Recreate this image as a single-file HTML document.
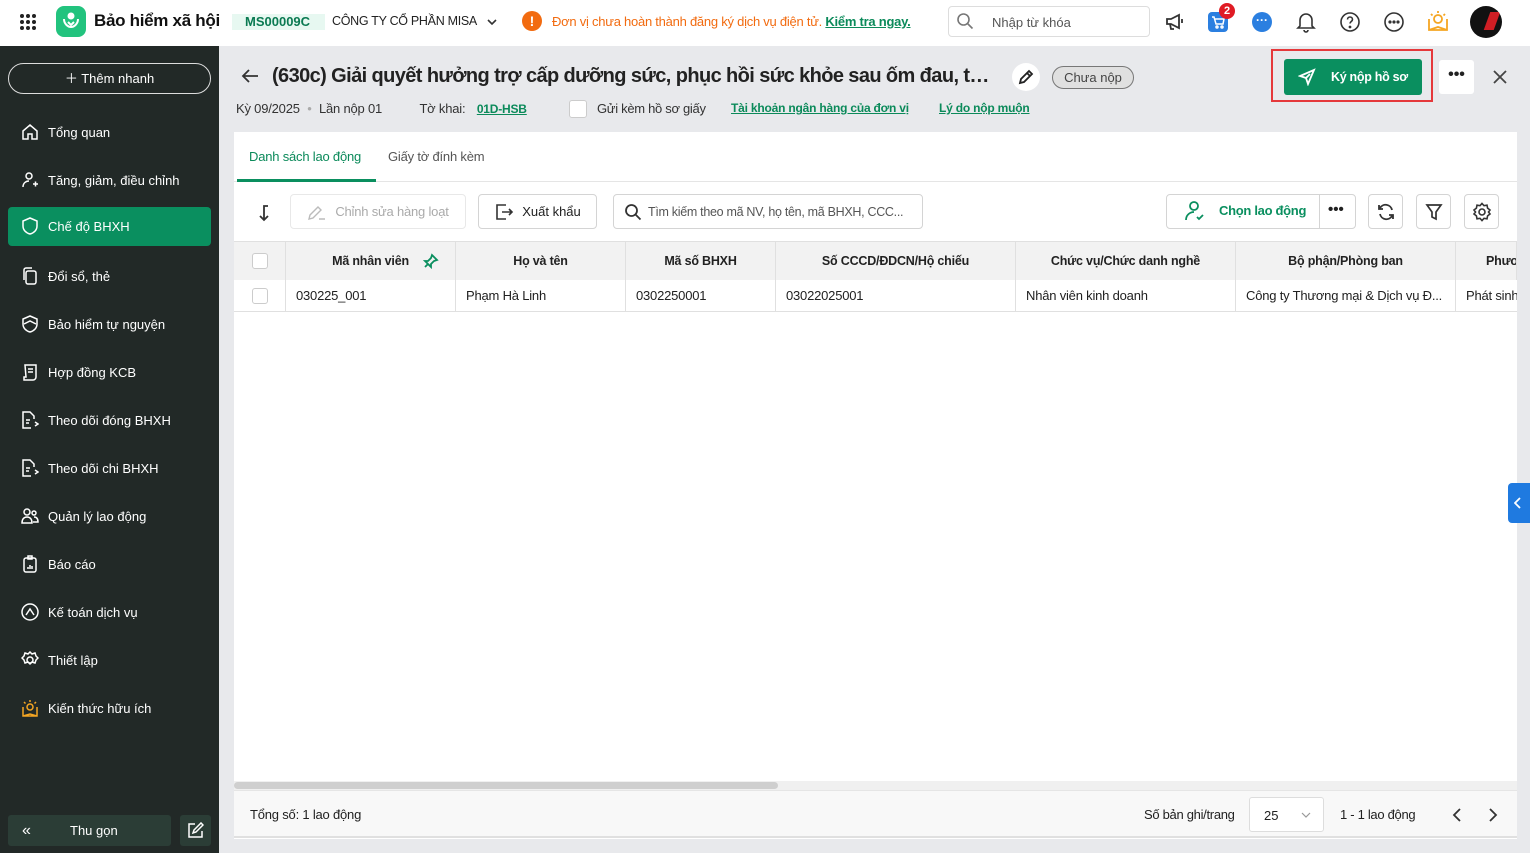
<!DOCTYPE html>
<html><head><meta charset="utf-8">
<style>
*{box-sizing:border-box;margin:0;padding:0}
body{width:1530px;height:853px;overflow:hidden;background:#e8e9ec;font-family:"Liberation Sans","Noto Sans CJK SC",sans-serif;font-size:13px;color:#212121;position:relative}
.a{position:absolute}
.hdr{left:0;top:0;width:1530px;height:46px;background:#fff}
.side{left:0;top:46px;width:219px;height:807px;background:#222927}
.nav{position:absolute;left:8px;width:203px;height:39px;color:#fff;font-size:13px;display:flex;align-items:center;padding-left:40px}
.nav svg{position:absolute;left:13px;top:10px}
.nav.on{background:#0a8f5f;border-radius:4px}
.btn{position:absolute;border:1px solid #d4d4d4;border-radius:4px;background:#fff;display:flex;align-items:center;justify-content:center}
.th,.td{position:absolute;display:flex;align-items:center;border-right:1px solid #e0e0e0;overflow:hidden;white-space:nowrap}
.th{top:242px;height:38px;background:#f2f2f2;font-weight:bold;justify-content:center;font-size:12.5px;color:#222;letter-spacing:-0.2px}
.td{top:280px;height:32px;padding-left:10px;border-bottom:1px solid #e0e0e0;letter-spacing:-0.2px}
.cb{width:16px;height:16px;border:1px solid #ccc;border-radius:3px;background:#fff}
</style></head><body>
<div class="a hdr"></div>
<svg class="a" style="left:19px;top:13px" width="18" height="18" viewBox="0 0 18 18" fill="#222"><circle cx="3" cy="3" r="2"/><circle cx="9" cy="3" r="2"/><circle cx="15" cy="3" r="2"/><circle cx="3" cy="9" r="2"/><circle cx="9" cy="9" r="2"/><circle cx="15" cy="9" r="2"/><circle cx="3" cy="15" r="2"/><circle cx="9" cy="15" r="2"/><circle cx="15" cy="15" r="2"/></svg>
<div class="a" style="left:56px;top:6px;width:30px;height:31px;border-radius:8px;background:#22c37e"></div>
<svg class="a" style="left:60px;top:10px" width="22" height="22" viewBox="0 0 22 22" fill="none" stroke="#fff" stroke-width="2"><circle cx="11" cy="6" r="2.5" fill="#fff"/><path d="M4 9c0 5 4 8 7 8s7-3 7-8"/><path d="M8 12l3 3 3-3"/></svg>
<div class="a" style="left:94px;top:11px;font-size:17px;font-weight:bold;color:#111;letter-spacing:-0.3px">Bảo hiểm xã hội</div>
<div class="a" style="left:232px;top:14px;width:93px;height:16px;background:#e7f8f1"></div>
<div class="a" style="left:245px;top:14px;font-weight:bold;color:#0b7a52;font-size:13px">MS00009C</div>
<div class="a" style="left:332px;top:14px;font-size:12.5px;color:#222;letter-spacing:-0.3px">CÔNG TY CỔ PHẦN MISA</div>
<svg class="a" style="left:486px;top:17px" width="12" height="10" viewBox="0 0 12 10" fill="none" stroke="#333" stroke-width="1.6"><path d="M2 3l4 4 4-4"/></svg>
<div class="a" style="left:522px;top:11px;width:20px;height:20px;border-radius:50%;background:#f26b10;color:#fff;font-weight:bold;text-align:center;line-height:20px;font-size:14px">!</div>
<div class="a" style="left:552px;top:14px;color:#f26b10;font-size:13px;letter-spacing:-0.25px;white-space:nowrap">Đơn vị chưa hoàn thành đăng ký dịch vụ điện tử. <b style="color:#0b8a5a;text-decoration:underline">Kiểm tra ngay.</b></div>
<div class="a" style="left:948px;top:6px;width:202px;height:31px;border:1px solid #ddd;border-radius:4px"></div>
<svg class="a" style="left:956px;top:12px" width="18" height="18" viewBox="0 0 18 18" fill="none" stroke="#777" stroke-width="1.6"><circle cx="7.5" cy="7.5" r="5.5"/><path d="M11.5 11.5l5 5"/></svg>
<div class="a" style="left:992px;top:15px;color:#555">Nhập từ khóa</div>
<svg class="a" style="left:1164px;top:12px" width="22" height="20" viewBox="0 0 22 20" fill="none" stroke="#333" stroke-width="1.8"><path d="M3 7h4l8-4v13l-8-4H3zM6 12l1 5h3M18 7v4"/></svg>
<div class="a" style="left:1208px;top:12px;width:20px;height:20px;border-radius:4px;background:#2b7fe0"></div>
<svg class="a" style="left:1210px;top:14px" width="16" height="16" viewBox="0 0 16 16" fill="none" stroke="#fff" stroke-width="1.5"><path d="M2 3h2l2 7h7l1-5H5"/><circle cx="7" cy="13" r="1"/><circle cx="12" cy="13" r="1"/></svg>
<div class="a" style="left:1219px;top:3px;width:16px;height:16px;border-radius:50%;background:#e01b24;color:#fff;font-size:11px;font-weight:bold;text-align:center;line-height:16px">2</div>
<div class="a" style="left:1252px;top:12px;width:20px;height:20px;border-radius:50%;background:#2b7fe0;color:#fff;font-size:12px;text-align:center;line-height:16px;font-weight:bold">···</div>
<svg class="a" style="left:1296px;top:11px" width="20" height="22" viewBox="0 0 20 22" fill="none" stroke="#333" stroke-width="1.6"><path d="M4 15V9a6 6 0 0112 0v6l2 2H2zM8 19a2 2 0 004 0"/></svg>
<svg class="a" style="left:1339px;top:11px" width="22" height="22" viewBox="0 0 22 22" fill="none" stroke="#333" stroke-width="1.6"><circle cx="11" cy="11" r="9"/><path d="M8.5 8.5a2.5 2.5 0 115 0c0 2-2.5 2-2.5 4"/><circle cx="11" cy="16" r=".6" fill="#333"/></svg>
<svg class="a" style="left:1383px;top:11px" width="22" height="22" viewBox="0 0 22 22" fill="none" stroke="#333" stroke-width="1.6"><circle cx="11" cy="11" r="9"/><circle cx="7" cy="11" r=".8" fill="#333"/><circle cx="11" cy="11" r=".8" fill="#333"/><circle cx="15" cy="11" r=".8" fill="#333"/></svg>
<svg class="a" style="left:1426px;top:9px" width="24" height="24" viewBox="0 0 24 24" fill="none" stroke="#f5a623" stroke-width="1.8"><path d="M3 10v11h18V10M3 21l9-3 9 3"/><circle cx="12" cy="10" r="4"/><path d="M12 2v2M5 5l1.5 1.5M19 5l-1.5 1.5"/></svg>
<div class="a" style="left:1470px;top:6px;width:32px;height:32px;border-radius:50%;background:#111;overflow:hidden"><div style="position:absolute;left:17px;top:6px;width:10px;height:18px;background:#d01e24;transform:skewX(-20deg)"></div></div>

<div class="a side"></div>
<div class="a" style="left:8px;top:63px;width:203px;height:31px;border:1px solid #ddd;border-radius:16px;color:#fff;text-align:center;line-height:29px;font-size:13px">＋ Thêm nhanh</div>
<div class="nav" style="top:113px"><svg width="18" height="18" viewBox="0 0 18 18" fill="none" stroke="#fff" stroke-width="1.5"><path d="M2 8l7-6 7 6v8H11v-5H7v5H2z"/></svg>Tổng quan</div>
<div class="nav" style="top:161px"><svg width="18" height="18" viewBox="0 0 18 18" fill="none" stroke="#fff" stroke-width="1.5"><circle cx="8" cy="5" r="3"/><path d="M2 16c0-4 3-6 6-6M12 13h5M14.5 10.5v5"/></svg>Tăng, giảm, điều chỉnh</div>
<div class="nav on" style="top:207px"><svg width="18" height="18" viewBox="0 0 18 18" fill="none" stroke="#fff" stroke-width="1.5"><path d="M9 1l7 3v5c0 4-3 7-7 8-4-1-7-4-7-8V4z"/></svg>Chế độ BHXH</div>
<div class="nav" style="top:257px"><svg width="18" height="18" viewBox="0 0 18 18" fill="none" stroke="#fff" stroke-width="1.5"><rect x="5" y="4" width="10" height="13" rx="2"/><path d="M3 13V3a2 2 0 012-2h6"/></svg>Đổi sổ, thẻ</div>
<div class="nav" style="top:305px"><svg width="18" height="18" viewBox="0 0 18 18" fill="none" stroke="#fff" stroke-width="1.5"><path d="M9 1l7 3v5c0 4-3 7-7 8-4-1-7-4-7-8V4z"/><path d="M3 9l6-3 6 3"/></svg>Bảo hiểm tự nguyện</div>
<div class="nav" style="top:353px"><svg width="18" height="18" viewBox="0 0 18 18" fill="none" stroke="#fff" stroke-width="1.5"><path d="M4 2h11v12a3 3 0 01-3 3H3v-3h2zM7 6h5M7 9h5"/></svg>Hợp đồng KCB</div>
<div class="nav" style="top:401px"><svg width="18" height="18" viewBox="0 0 18 18" fill="none" stroke="#fff" stroke-width="1.5"><path d="M10 17H2V1h7l4 4v3M5 9h4M5 12h3"/><path d="M14 11l3 2-3 2"/></svg>Theo dõi đóng BHXH</div>
<div class="nav" style="top:449px"><svg width="18" height="18" viewBox="0 0 18 18" fill="none" stroke="#fff" stroke-width="1.5"><path d="M10 17H2V1h7l4 4v3M5 9h4M5 12h3"/><path d="M14 11l3 2-3 2"/></svg>Theo dõi chi BHXH</div>
<div class="nav" style="top:497px"><svg width="18" height="18" viewBox="0 0 18 18" fill="none" stroke="#fff" stroke-width="1.5"><circle cx="6" cy="5" r="3"/><circle cx="13" cy="6" r="2"/><path d="M1 16c0-4 2-6 5-6s5 2 5 6zM13 10c2 0 4 1 4 5h-5"/></svg>Quản lý lao động</div>
<div class="nav" style="top:545px"><svg width="18" height="18" viewBox="0 0 18 18" fill="none" stroke="#fff" stroke-width="1.5"><rect x="3" y="3" width="12" height="14" rx="2"/><path d="M7 1h4v3H7zM7 14v-2M9 14v-4M11 14v-3"/></svg>Báo cáo</div>
<div class="nav" style="top:593px"><svg width="18" height="18" viewBox="0 0 18 18" fill="none" stroke="#fff" stroke-width="1.5"><circle cx="9" cy="9" r="8"/><path d="M5 12l4-6 4 6"/></svg>Kế toán dịch vụ</div>
<div class="nav" style="top:641px"><svg width="18" height="18" viewBox="0 0 18 18" fill="none" stroke="#fff" stroke-width="1.5"><circle cx="9" cy="9" r="3"/><path d="M9 1l2 2 3-1 1 3 2 2-2 2-1 3-3-1-2 2-2-2-3 1-1-3-2-2 2-2 1-3 3 1z"/></svg>Thiết lập</div>
<div class="nav" style="top:689px"><svg width="18" height="18" viewBox="0 0 18 18" fill="none" stroke="#f5a623" stroke-width="1.5"><path d="M2 8v9h14V8M2 17l7-2 7 2"/><circle cx="9" cy="8" r="3"/><path d="M9 1v2M3 3l1.5 1.5M15 3l-1.5 1.5"/></svg>Kiến thức hữu ích</div>
<div class="a" style="left:8px;top:815px;width:163px;height:31px;background:#2b3d36;border-radius:3px;color:#fff;line-height:31px"><span style="position:absolute;left:14px;font-size:16px">«</span><span style="position:absolute;left:62px">Thu gọn</span></div>
<div class="a" style="left:180px;top:815px;width:31px;height:31px;background:#2b3d36;border-radius:3px"></div>
<svg class="a" style="left:187px;top:822px" width="17" height="17" viewBox="0 0 17 17" fill="none" stroke="#fff" stroke-width="1.5"><path d="M8 2H2v13h13V9M6 11l1-3 7-7 2 2-7 7z"/></svg>

<svg class="a" style="left:241px;top:68px" width="18" height="16" viewBox="0 0 18 16" fill="none" stroke="#333" stroke-width="1.8"><path d="M17 8H2M8 2L2 8l6 6"/></svg>
<div class="a" style="left:272px;top:65px;width:724px;font-size:20px;font-weight:bold;color:#222;white-space:nowrap;overflow:hidden;text-overflow:ellipsis;letter-spacing:-0.6px">(630c) Giải quyết hưởng trợ cấp dưỡng sức, phục hồi sức khỏe sau ốm đau, thai sản</div>
<div class="a" style="left:1012px;top:63px;width:28px;height:28px;border-radius:50%;background:#fff"></div>
<svg class="a" style="left:1018px;top:69px" width="16" height="16" viewBox="0 0 16 16" fill="none" stroke="#222" stroke-width="1.8"><path d="M2 14l1-4 8-8 3 3-8 8zM9 4l3 3"/></svg>
<div class="a" style="left:1052px;top:66px;width:82px;height:23px;border:1px solid #777;border-radius:12px;background:#e0e0e0;text-align:center;line-height:21px;color:#444">Chưa nộp</div>
<div class="a" style="left:1271px;top:49px;width:162px;height:53px;border:2px solid #e5383b"></div>
<div class="a" style="left:1284px;top:59px;width:138px;height:36px;background:#0a8f5f;border-radius:3px;color:#fff;font-weight:bold;line-height:36px;font-size:12.5px;padding-left:47px;letter-spacing:-0.3px">Ký nộp hồ sơ</div>
<svg class="a" style="left:1298px;top:68px" width="18" height="18" viewBox="0 0 18 18" fill="none" stroke="#fff" stroke-width="1.8"><path d="M16 2L2 8l6 2 2 6zM8 10l4-4"/></svg>
<div class="a" style="left:1439px;top:60px;width:35px;height:34px;background:#fff;border-radius:3px;text-align:center;font-weight:bold;line-height:30px;font-size:16px">•••</div>
<svg class="a" style="left:1493px;top:70px" width="14" height="14" viewBox="0 0 14 14" stroke="#444" stroke-width="1.8"><path d="M1 1l12 12M13 1L1 13"/></svg>
<div class="a" style="left:236px;top:101px;font-size:13px;color:#333;white-space:nowrap;letter-spacing:-0.2px">Kỳ 09/2025 <span style="color:#aaa;margin:0 4px">•</span> Lần nộp 01 <span style="margin-left:34px">Tờ khai:</span> <b style="color:#0b8a5a;text-decoration:underline;margin-left:8px;font-size:12px">01D-HSB</b></div>
<div class="a cb" style="left:569px;top:100px;width:18px;height:18px"></div>
<div class="a" style="left:597px;top:101px;color:#333;letter-spacing:-0.3px">Gửi kèm hồ sơ giấy</div>
<div class="a" style="left:731px;top:101px;color:#0b8a5a;font-weight:bold;text-decoration:underline;font-size:12px;letter-spacing:-0.2px">Tài khoản ngân hàng của đơn vị</div>
<div class="a" style="left:939px;top:101px;color:#0b8a5a;font-weight:bold;text-decoration:underline;font-size:12px;letter-spacing:-0.2px">Lý do nộp muộn</div>

<div class="a" style="left:234px;top:132px;width:1283px;height:707px;background:#fff"></div>
<div class="a" style="left:234px;top:181px;width:1283px;height:1px;background:#e5e5e5"></div>
<div class="a" style="left:249px;top:149px;color:#0b8a5a;font-size:13px;letter-spacing:-0.2px">Danh sách lao động</div>
<div class="a" style="left:237px;top:179px;width:139px;height:3px;background:#0a8f5f"></div>
<div class="a" style="left:388px;top:149px;color:#555;letter-spacing:-0.2px">Giấy tờ đính kèm</div>
<svg class="a" style="left:256px;top:204px" width="16" height="18" viewBox="0 0 16 18" fill="none" stroke="#333" stroke-width="1.8"><path d="M12 2H8v14M4 12l4 4 4-4"/></svg>
<div class="btn" style="left:290px;top:194px;width:176px;height:35px;border-color:#e8e8e8;color:#aaa;letter-spacing:-0.2px"><svg width="20" height="18" viewBox="0 0 20 18" fill="none" stroke="#bbb" stroke-width="1.4" style="margin-right:8px"><path d="M2 16l1-4 8-8 3 3-8 8zM12 16h6"/></svg>Chỉnh sửa hàng loạt</div>
<div class="btn" style="left:478px;top:194px;width:119px;height:35px"><svg width="20" height="20" viewBox="0 0 20 20" fill="none" stroke="#333" stroke-width="1.6" style="margin-right:8px"><path d="M12 3H3v14h9M8 10h10M15 7l3 3-3 3"/></svg>Xuất khẩu</div>
<div class="btn" style="left:613px;top:194px;width:310px;height:35px;justify-content:flex-start;padding-left:10px;color:#555;font-size:12.5px;letter-spacing:-0.3px;white-space:nowrap;overflow:hidden"><svg width="18" height="18" viewBox="0 0 18 18" fill="none" stroke="#333" stroke-width="1.8" style="margin-right:6px;flex:none"><circle cx="7.5" cy="7.5" r="5.5"/><path d="M11.5 11.5l5 5"/></svg>Tìm kiếm theo mã NV, họ tên, mã BHXH, CCC...</div>
<div class="btn" style="left:1166px;top:194px;width:190px;height:35px;justify-content:flex-start"></div>
<svg class="a" style="left:1184px;top:200px" width="22" height="22" viewBox="0 0 22 22" fill="none" stroke="#0a8f5f" stroke-width="1.8"><circle cx="10" cy="6" r="4"/><path d="M2 20c0-5 4-8 8-8M13 17l2 2 4-4"/></svg>
<div class="a" style="left:1219px;top:203px;color:#0a8f5f;font-weight:bold;font-size:13px;letter-spacing:-0.3px">Chọn lao động</div>
<div class="a" style="left:1319px;top:195px;width:1px;height:33px;background:#d4d4d4"></div>
<div class="a" style="left:1328px;top:201px;font-weight:bold;font-size:15px">•••</div>
<div class="btn" style="left:1368px;top:194px;width:35px;height:35px"><svg width="20" height="20" viewBox="0 0 20 20" fill="none" stroke="#333" stroke-width="1.8"><path d="M16 8a6.5 6.5 0 00-12-2M4 12a6.5 6.5 0 0012 2M3 3v4h4M17 17v-4h-4"/></svg></div>
<div class="btn" style="left:1416px;top:194px;width:35px;height:35px"><svg width="18" height="18" viewBox="0 0 18 18" fill="none" stroke="#333" stroke-width="1.7"><path d="M2 2h14l-5 7v7l-4-2V9z"/></svg></div>
<div class="btn" style="left:1464px;top:194px;width:35px;height:35px"><svg width="20" height="20" viewBox="0 0 20 20" fill="none" stroke="#333" stroke-width="1.6"><circle cx="10" cy="10" r="3"/><path d="M10 1.5l2 2.2 3-.5.6 3 2.4 1.8-1.5 2 1.5 2-2.4 1.8-.6 3-3-.5-2 2.2-2-2.2-3 .5-.6-3L2 12l1.5-2L2 8l2.4-1.8.6-3 3 .5z"/></svg></div>

<div class="a" style="left:234px;top:241px;width:1283px;height:1px;background:#e0e0e0"></div>
<div class="th" style="left:234px;width:52px"><div class="cb"></div></div>
<div class="th" style="left:286px;width:170px">Mã nhân viên<svg style="position:absolute;right:16px" width="16" height="16" viewBox="0 0 16 16" fill="none" stroke="#0a8f5f" stroke-width="1.8"><path d="M9 2l5 5-3 1-3 3 0 3-6-6h3l3-3zM5 11l-3 3"/></svg></div>
<div class="th" style="left:456px;width:170px">Họ và tên</div>
<div class="th" style="left:626px;width:150px">Mã số BHXH</div>
<div class="th" style="left:776px;width:240px">Số CCCD/ĐDCN/Hộ chiếu</div>
<div class="th" style="left:1016px;width:220px">Chức vụ/Chức danh nghề</div>
<div class="th" style="left:1236px;width:220px">Bộ phận/Phòng ban</div>
<div class="th" style="left:1456px;width:61px;justify-content:flex-start;padding-left:30px">Phươ</div>
<div class="td" style="left:234px;width:52px;justify-content:center;padding:0"><div class="cb"></div></div>
<div class="td" style="left:286px;width:170px">030225_001</div>
<div class="td" style="left:456px;width:170px">Phạm Hà Linh</div>
<div class="td" style="left:626px;width:150px">0302250001</div>
<div class="td" style="left:776px;width:240px">03022025001</div>
<div class="td" style="left:1016px;width:220px">Nhân viên kinh doanh</div>
<div class="td" style="left:1236px;width:220px">Công ty Thương mại &amp; Dịch vụ Đ...</div>
<div class="td" style="left:1456px;width:61px;border-right:none">Phát sinh</div>
<div class="a" style="left:234px;top:781px;width:1283px;height:9px;background:#f0f0f0"></div>
<div class="a" style="left:234px;top:782px;width:544px;height:7px;background:#cfcfcf;border-radius:4px"></div>
<div class="a" style="left:234px;top:790px;width:1283px;height:48px;background:#f8f8f8;border-top:1px solid #e5e5e5;border-bottom:2px solid #e0e0e0"></div>
<div class="a" style="left:250px;top:807px;letter-spacing:-0.2px">Tổng số: 1 lao động</div>
<div class="a" style="left:1144px;top:807px;letter-spacing:-0.3px">Số bản ghi/trang</div>
<div class="a" style="left:1249px;top:797px;width:75px;height:35px;border:1px solid #ddd;border-radius:3px;background:#fff;padding:10px 0 0 14px">25<svg style="position:absolute;right:12px;top:13px" width="10" height="8" viewBox="0 0 10 8" fill="none" stroke="#999" stroke-width="1.2"><path d="M1 2l4 4 4-4"/></svg></div>
<div class="a" style="left:1340px;top:807px;letter-spacing:-0.3px">1 - 1 lao động</div>
<svg class="a" style="left:1452px;top:807px" width="10" height="16" viewBox="0 0 10 16" fill="none" stroke="#333" stroke-width="1.8"><path d="M8 2L2 8l6 6"/></svg>
<svg class="a" style="left:1488px;top:807px" width="10" height="16" viewBox="0 0 10 16" fill="none" stroke="#333" stroke-width="1.8"><path d="M2 2l6 6-6 6"/></svg>
<div class="a" style="left:1508px;top:483px;width:22px;height:40px;background:#1f7ae0;border-radius:4px 0 0 4px"></div>
<svg class="a" style="left:1514px;top:497px" width="8" height="12" viewBox="0 0 8 12" fill="none" stroke="#fff" stroke-width="1.8"><path d="M6 1L1 6l5 5"/></svg>
</body></html>
